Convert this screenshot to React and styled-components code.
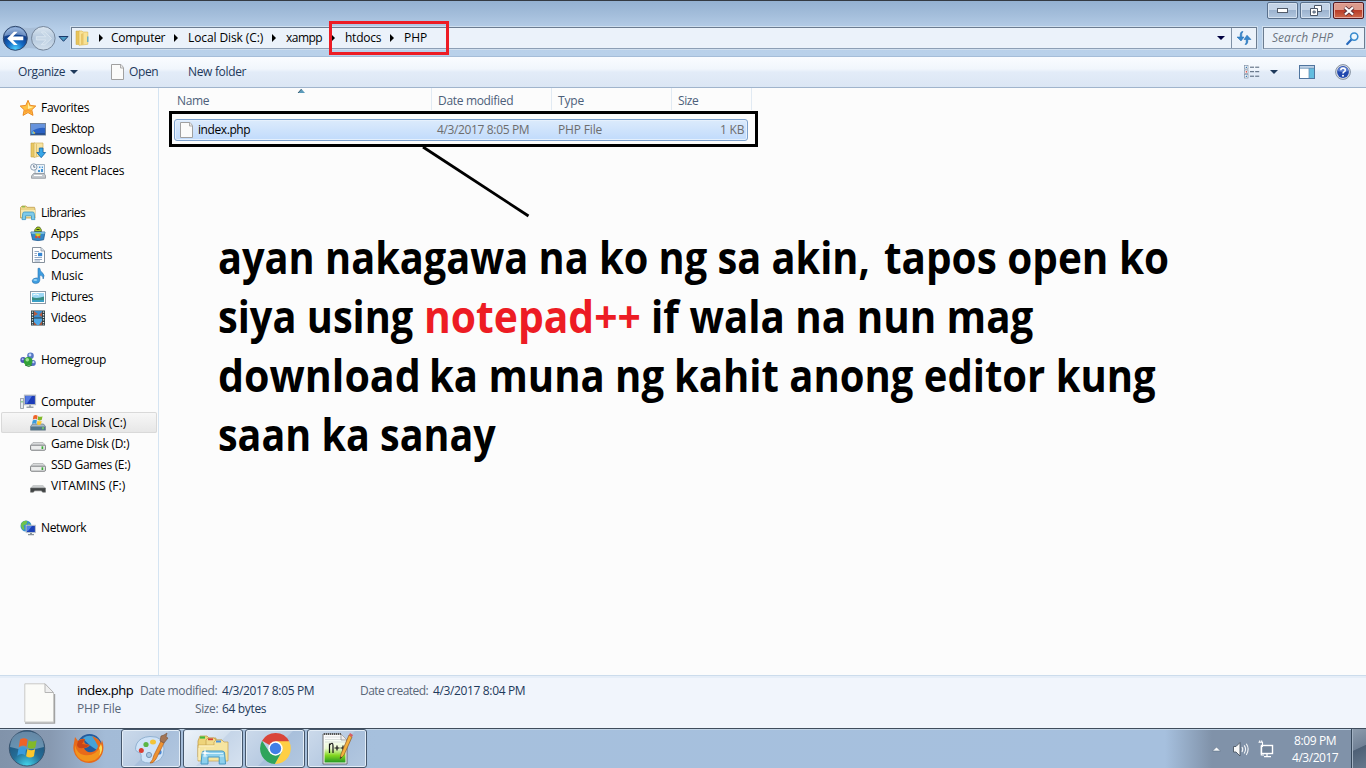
import React, { useLayoutEffect, useRef, useState } from "react";
import styled, { createGlobalStyle, css } from "styled-components";

const Global = createGlobalStyle`
  * { box-sizing: border-box; }
  html, body { margin: 0; padding: 0; overflow: hidden; }
  body { font: 12px/16px "Open Sans", "Noto Sans", sans-serif; color: #000; }
  svg { display: block; flex: none; overflow: visible; }
`;

/* ---------- text that keeps a fixed width ---------- */

const Slot = styled.span`
  display: block;
  flex: none;
  width: ${(p) => p.$w}px;
  margin-left: ${(p) => p.$ml || 0}px;
  white-space: pre;
`;
const Run = styled.span`
  display: inline-block;
  transform-origin: 0 50%;
  white-space: pre;
`;

function Label({ w, ml, children }) {
  const ref = useRef(null);
  const [spacing, setSpacing] = useState(0);
  useLayoutEffect(() => {
    const natural = ref.current.getBoundingClientRect().width;
    setSpacing((w + 0.2 - natural) / ref.current.textContent.length);
  }, [w]);
  return (
    <Slot $w={w} $ml={ml}>
      <Run ref={ref} style={{ letterSpacing: spacing }}>{children}</Run>
    </Slot>
  );
}

function Squeezed({ w, ml, children }) {
  const ref = useRef(null);
  const [scale, setScale] = useState(1);
  useLayoutEffect(() => setScale(w / ref.current.offsetWidth), [w]);
  return (
    <Slot $w={w} $ml={ml}>
      <Run ref={ref} style={{ transform: `scaleX(${scale})` }}>{children}</Run>
    </Slot>
  );
}

/* ---------- window frame ---------- */

const Screen = styled.div`
  position: relative;
  width: 1366px;
  height: 768px;
  display: flex;
  flex-direction: column;
  overflow: hidden;
  background: #fcfcfc;
`;
const Frame = styled.header`
  height: 57px;
  border-top: 1px solid #343a42;
  background: linear-gradient(#94b1d1 0, #a4bedb 14px, #b8d0ea 30px, #b9d1ea 100%);
  border-bottom: 1px solid #a5bdd8;
`;
const Caption = styled.div`
  display: flex;
  justify-content: flex-end;
  gap: 2px;
  height: 26px;
  padding: 1px 2px 0 0;
`;
const CaptionButton = styled.div`
  width: 31px;
  height: 17px;
  display: flex;
  align-items: center;
  justify-content: center;
  border: 1px solid ${(p) => (p.$close ? "#541a22" : "#59708c")};
  border-radius: 2px;
  box-shadow: inset 0 0 0 1px ${(p) => (p.$close ? "#e6aaa0" : "#d4e1ef")};
  background: ${(p) =>
    p.$close
      ? "linear-gradient(#dc9a8c 0 45%, #b93c28 50%, #cf6a4c)"
      : "linear-gradient(#c3d3e6 0 45%, #9cb3cf 50%, #b3c8e0)"};
`;
const NavBar = styled.div`
  display: flex;
  height: 22px;
`;
const NavButtons = styled.div`
  width: 71px;
  height: 22px;
  flex: none;
`;
const boxed = css`
  height: 22px;
  display: flex;
  align-items: center;
  border: 1px solid #6b7c90;
  border-bottom-color: #8d9fb5;
  background: #ebf2fa;
  box-shadow: 0 0 0 1px #cfdfef;
`;
const Address = styled.div`
  ${boxed}
  width: 1186px;
  padding-left: 3px;
`;
const CrumbArrow = styled.div`
  width: 23px;
  padding-right: 1px;
  display: flex;
  justify-content: center;
`;
const AddressEnd = styled.div`
  margin-left: auto;
  height: 100%;
  display: flex;
  align-items: center;
`;
const Drop = styled.div`
  padding-right: 6px;
`;
const Refresh = styled.div`
  width: 25px;
  height: 100%;
  border-left: 1px solid #7f91a6;
  display: flex;
  align-items: center;
  justify-content: center;
`;
const Search = styled.div`
  ${boxed}
  width: 102px;
  margin-left: 6px;
  padding-left: 8px;
  font-style: italic;
  color: #6d7580;
  gap: 13px;
`;

const Toolbar = styled.div`
  height: 31px;
  flex: none;
  display: flex;
  align-items: center;
  padding: 0 15px 0 18px;
  color: #1e395b;
  background: linear-gradient(#fafcff 0, #f1f6fc 12px, #e3ecf8 15px, #dbe6f4 30px);
  border-bottom: 1px solid #a0b4cc;
`;
const Gap = styled.div`
  flex: none;
  width: ${(p) => p.$w}px;
`;
const Spacer = styled.div`
  flex: 1;
`;

/* ---------- navigation pane ---------- */

const Body = styled.main`
  height: 587px;
  flex: none;
  display: flex;
`;
const Sidebar = styled.nav`
  width: 159px;
  flex: none;
  padding-top: 9px;
  border-right: 1px solid #d5e4f2;
`;
const NavItem = styled.div`
  height: 21px;
  margin: 0 1px;
  padding-left: ${(p) => (p.$top ? 19 : 29)}px;
  display: flex;
  align-items: center;
  gap: 5px;
  border-radius: 2px;
  ${(p) =>
    p.$active &&
    css`
      background: linear-gradient(#f8f8f8, #e6e6e6);
      box-shadow: inset 0 0 0 1px #d9d9d9;
    `}
`;
const NavGroup = styled.div`
  margin-bottom: 21px;
`;

/* ---------- file list ---------- */

const Files = styled.section`
  flex: 1;
`;
const Head = styled.div`
  height: 24px;
  display: flex;
  padding-left: 12px;
  color: #4c607a;
`;
const HeadCell = styled.div`
  width: ${(p) => p.$w}px;
  height: 22px;
  padding: 5px 0 0 6px;
  border-right: 1px solid #e1eaf3;
`;
const FileRow = styled.div`
  width: 574px;
  height: 22px;
  margin: 7px 0 0 15px;
  padding-left: 5px;
  display: flex;
  align-items: center;
  border: 1px solid #7da2ce;
  border-radius: 3px;
  box-shadow: inset 0 0 0 1px #e5f0fd;
  background: linear-gradient(#dcebfc, #c1dbfc);
  color: #6d6d6d;
`;
const FileName = styled.div`
  color: #000;
`;

/* ---------- details pane ---------- */

const Details = styled.footer`
  height: 53px;
  flex: none;
  display: flex;
  padding: 7px 0 0 24px;
  border-top: 1px solid #ccdcec;
  box-shadow: inset 0 2px 0 #e6eef8;
  background: #f1f5fc;
  color: #5a6779;
`;
const DetailGrid = styled.div`
  margin-left: 22px;
  display: grid;
  grid-template-rows: 18px 18px;
  grid-template-columns: 63px 78px 4px 138px 69px 4px 100px;
`;
const Value = styled.div`
  color: #1e395b;
`;
const Title = styled.div`
  font-size: 13px;
  line-height: 15px;
  color: #000;
`;
const Right = styled.div`
  display: flex;
  justify-content: flex-end;
`;

/* ---------- taskbar ---------- */

const Taskbar = styled.div`
  height: 40px;
  flex: none;
  display: flex;
  border-top: 1px solid #3f4c5c;
  box-shadow: inset 0 1px 0 #c0d3e6;
  background: linear-gradient(90deg, #8193aa 0, #8799b1 50px, #a3bbd7 105px, #a6c0dd 380px, #a6c0de 1165px, #8092a9 1212px, #8092a9);
`;
const Start = styled.div`
  width: 121px;
  flex: none;
  display: flex;
  align-items: center;
`;
const TaskButton = styled.div`
  width: 60px;
  height: 39px;
  margin-right: ${(p) => p.$mr || 2}px;
  display: flex;
  align-items: center;
  justify-content: center;
  border: 1px solid #45566b;
  border-radius: 3px;
  box-shadow: inset 0 0 0 1px #e3edf7;
  background: ${(p) =>
    p.$active
      ? "linear-gradient(135deg, #eef4fa, #d3e0ee 50%, #c5d5e8 51%, #d6e2f0)"
      : "linear-gradient(135deg, #ccdaeb, #b8cbe2 50%, #a8bfdb 51%, #b3c8e0)"};
`;
const Tray = styled.div`
  margin-left: auto;
  display: flex;
  align-items: center;
`;
const Clock = styled.div`
  width: 46px;
  margin-left: 19px;
  display: flex;
  flex-direction: column;
  align-items: center;
  color: #fff;
  line-height: 17px;
`;
const ShowDesktop = styled.div`
  width: 15px;
  height: 39px;
  margin-left: 13px;
  border-left: 1px solid #36475a;
  box-shadow: inset 1px 0 0 #a4b3c4;
  background: linear-gradient(155deg, #8d9cad 0, #718196 48%, #4e6076 50%, #66788c);
`;

/* ---------- annotations ---------- */

const RedMark = styled.div`
  position: absolute;
  left: 329px;
  top: 21px;
  width: 120px;
  height: 34px;
  border: 3px solid #ed1c24;
`;
const BlackMark = styled.div`
  position: absolute;
  left: 169px;
  top: 111px;
  width: 589px;
  height: 36px;
  border: 3px solid #000;
`;
const Pointer = styled.svg`
  position: absolute;
  left: 420px;
  top: 145px;
`;
const SortMark = styled.svg`
  position: absolute;
  left: 298px;
  top: 89px;
`;
const Note = styled.div`
  position: absolute;
  left: 218px;
  top: 228px;
  font-size: 44px;
  line-height: 59px;
  font-weight: 700;
`;
const NoteLine = styled.div`
  display: flex;
  height: 59px;
`;
const Red = styled.div`
  color: #ed1c24;
`;

/* ---------- icons ---------- */

const Icon = ({ children, s = 16, v = 16 }) => (
  <svg width={s} height={s} viewBox={`0 0 ${v} ${v}`}>{children}</svg>
);
const ArrowRight = () => <svg width="4" height="8" viewBox="0 0 4 8"><path d="M0 0L4 4L0 8Z" /></svg>;
const ArrowDown = ({ fill = "#1e395b" }) => (
  <svg width="8" height="4" viewBox="0 0 8 4"><path d="M0 0H8L4 4Z" fill={fill} /></svg>
);
const Page = ({ w = 14, h = 16 }) => (
  <svg width={w} height={h} viewBox="0 0 14 16">
    <path d="M.5.5H10L12.5 3.5V15.5H.5Z" fill="#fbfbfa" stroke="#a0a0a0" strokeWidth="1" />
    <path d="M9.5 .5V4H12.5" fill="#e9e9e9" stroke="#a5a5a5" strokeWidth=".9" />
  </svg>
);
const BigPage = () => (
  <svg width="31" height="41" viewBox="0 0 31 41">
    <path d="M1 40H30.5V11" fill="none" stroke="#a2a2a2" strokeWidth="1.4" />
    <path d="M.8.8H21L29.5 10V39H.8Z" fill="#fbfbf8" stroke="#c9c9c6" />
    <path d="M21 .8V9.5H29.5Z" fill="#efefef" stroke="#b5b5b5" />
  </svg>
);
const Star = () => (
  <Icon>
    <path d="M8 .3L10.2 5.4L15.8 6L11.8 9.8L13 15.4L8 12.6L3 15.4L4.2 9.8L.2 6L5.8 5.4Z" fill="#ffc143" stroke="#e88119" strokeWidth=".9" />
    <path d="M8 2.5L9.3 6.3L13.5 7L8 9Z" fill="#fff0a4" />
    <path d="M8 9L11 10L11.8 13.4L8 11.3L4.4 13.4L5 10Z" fill="#fb9f35" />
  </Icon>
);
const Desktop = () => (
  <Icon>
    <rect x=".5" y="2.5" width="15" height="11.5" fill="#2b62c4" stroke="#718299" />
    <path d="M1 3H15V7Q8 6 1 11Z" fill="#6793dc" />
    <path d="M1 13H15" stroke="#244a80" strokeWidth="1.4" />
    <path d="M1.5 10.5H4V13H1.5Z" fill="#54b4e8" /><path d="M3 10L5.5 12L4 13Z" fill="#f2c644" />
  </Icon>
);
const Downloads = () => (
  <Icon>
    <path d="M1 1H5V15H1Z" fill="#e9c862" stroke="#c6a244" strokeWidth=".6" />
    <path d="M4 1H13V13L4 15.5Z" fill="#f7e3a0" stroke="#d1b05a" strokeWidth=".7" />
    <path d="M6.5 2V14.5" stroke="#e3c36d" strokeWidth="1" />
    <path d="M9.3 6H13V10.5H15.6L11.2 15.7L6.8 10.5H9.3Z" fill="#38a7e8" stroke="#1762a5" strokeWidth=".8" />
  </Icon>
);
const Recent = () => (
  <Icon>
    <path d="M5 1.5H14.5V11H5Z" fill="#eaf3fa" stroke="#8fa1b2" strokeWidth=".8" />
    <path d="M9 3.5H10.4V5H9ZM11.8 3.5H13V5H11.8ZM8 7H10V9H8ZM11 6H13V9H11Z" fill="#4897d8" />
    <path d="M1.5 13L3.5 10.5H14L15.5 12.5V15.3H1.5Z" fill="#c3c8cd" stroke="#84898f" strokeWidth=".7" />
    <path d="M4 12.5H12" stroke="#fff" />
    <circle cx="3.8" cy="4" r="3.2" fill="#f7f9fb" stroke="#8195aa" strokeWidth=".9" />
    <path d="M3.8 2V4.2H5.3" fill="none" stroke="#41566e" strokeWidth=".8" />
  </Icon>
);
const Libraries = () => (
  <Icon>
    <path d="M.5 2.5L2 1H6L7 2.3H14.5L15 4V13H.5Z" fill="#ecd588" stroke="#c1a04e" strokeWidth=".8" />
    <path d="M1 5H15V12H1Z" fill="#f8eab1" />
    <path d="M2 1.8H5" stroke="#73b943" strokeWidth="1" />
    <path d="M2.8 8.3Q3 7 4.5 7H12.6Q14 7 14.2 8.3L14.9 14.6H11.5V10.8H5.6V14.6H2Z" fill="#7fcbea" stroke="#3a94c2" strokeWidth=".8" />
  </Icon>
);
const Apps = () => (
  <Icon>
    <path d="M4.5 5.5Q4.6 3 6 2.2L7 1H9.6L10.4 2.2Q11.5 3 11.5 5.5Z" fill="#a6c922" stroke="#3c5212" strokeWidth=".7" />
    <path d="M.9 6H15L13.6 13.8Q8 15.4 2.6 13.8Z" fill="#3489c8" stroke="#1d5a94" strokeWidth=".8" />
    <path d="M1.2 6H14.8L14.5 8H1.6Z" fill="#71b8df" />
    <path d="M5 7.5H11L10 10H6Z" fill="#b1d129" /><circle cx="6.3" cy="11" r="1.2" fill="#e34b2a" />
    <circle cx="9.3" cy="11" r="1.2" fill="#e34b2a" /><circle cx="7.8" cy="9.4" r="1.1" fill="#f1c52d" /><path d="M6.5 3H9.5V4H6.5Z" fill="#263d15" />
  </Icon>
);
const Documents = () => (
  <Icon>
    <path d="M2.5 .5H11L14.5 4V15.5H2.5Z" fill="#fff" stroke="#788592" strokeWidth=".9" />
    <path d="M11 .6V4H14.3" fill="#dce5ee" stroke="#788592" strokeWidth=".7" />
    <path d="M4.5 4.5H9M4.5 6.5H7M4.5 8.5H7M4.5 10.5H12M4.5 12.5H12M4.5 14H10" stroke="#7993b4" strokeWidth=".8" />
    <path d="M8 5.8H12.2V9.2H8Z" fill="#3585d2" />
  </Icon>
);
const Music = () => (
  <Icon>
    <path d="M8 .3H9.8Q10 3.2 12.3 4.7Q15.3 7 13.2 11Q13.4 7.7 9.8 7V12.3Q9.5 15.5 5.6 15.6Q2 15.3 2.2 12.8Q2.7 10.3 6 10Q7 9.9 8 10.2Z" fill="#3e9ee1" stroke="#276eae" strokeWidth=".6" />
    <ellipse cx="5.3" cy="12" rx="2" ry="1" fill="#97d1f4" />
  </Icon>
);
const Pictures = () => (
  <Icon>
    <rect x=".5" y="2.5" width="15" height="12" fill="#fff" stroke="#8e9ba8" />
    <path d="M2 4H14V9H2Z" fill="#9ed8f5" /><path d="M2 8Q7 10 14 7.5V13H2Z" fill="#388e86" />
    <path d="M2 11H14V13H2Z" fill="#3a9fc4" /><path d="M3 6Q6 4 9 6" stroke="#f4fcff" fill="none" />
  </Icon>
);
const Videos = () => (
  <Icon>
    <rect x="1" y=".5" width="14" height="15" fill="#2d3d43" />
    <path d="M4 1H12V7.5H4Z" fill="#3c8ed0" /><path d="M4 8.5H12V15H4Z" fill="#4ca8e8" />
    <path d="M4 1L8 4L4 6ZM12 2L9 5L12 7Z" fill="#b65c40" /><path d="M4 12L7 15H4ZM12 11L9 15H12Z" fill="#a6573e" />
    <path d="M2.5 1.5V15M13.5 1.5V15" stroke="#e4eceb" strokeWidth="1.3" strokeDasharray="1.3 1.3" />
  </Icon>
);
const Homegroup = () => (
  <Icon>
    <circle cx="10.5" cy="3.8" r="3.3" fill="#5577c5" /><circle cx="3.2" cy="8" r="2.9" fill="#4b58b9" />
    <circle cx="12.8" cy="10.9" r="3" fill="#526fc0" /><circle cx="8.2" cy="9.4" r="4.4" fill="#32a238" />
    <circle cx="10" cy="3" r="1.4" fill="#c7dafa" /><circle cx="2.7" cy="7.2" r="1" fill="#b5c4f4" />
    <circle cx="7.3" cy="7.7" r="1.8" fill="#9ee492" /><circle cx="13.4" cy="10.2" r="1.1" fill="#c2d6f8" />
    <path d="M5 13Q9 16 12 13" stroke="#22742d" fill="none" />
  </Icon>
);
const Computer = () => (
  <Icon>
    <rect x=".6" y="4.5" width="2.8" height="10" fill="#e6eaed" stroke="#8d979e" strokeWidth=".8" />
    <path d="M2 7V8.5" stroke="#3bb843" />
    <rect x="4.5" y="1.2" width="11" height="9.4" fill="#1c3cb9" stroke="#b3bbc3" strokeWidth="1.2" />
    <path d="M5.3 2H12L7 9.5H5.3Z" fill="#5278e3" />
    <path d="M9 11.2H11V12.6H13.5V14H6.5V12.6H9Z" fill="#9aa3aa" />
  </Icon>
);
const Flag = () => (
  <>
    <path d="M3.3 1.4Q5.5 .1 7.4 1.4L6.8 4.5Q4.8 3.3 2.6 4.7Z" fill="#ef6328" />
    <path d="M8 1.7Q10 2.8 12.3 1.7L11.6 4.8Q9.5 6 7.4 4.8Z" fill="#82b929" />
    <path d="M2.5 5.3Q4.6 4 6.7 5.2L6 8.2Q4 7 1.8 8.4Z" fill="#399bdc" />
    <path d="M7.3 5.5Q9.4 6.6 11.5 5.5L10.8 8.6Q8.7 9.7 6.6 8.6Z" fill="#fcc72c" />
  </>
);
const SystemDisk = () => (
  <Icon>
    <path d="M2.5 9H13.5L15.5 11.5V15.2H.5V11.5Z" fill="#a9bac5" stroke="#536776" strokeWidth=".6" />
    <path d="M1 11.5H15V15H1Z" fill="#54788d" /><path d="M13 12V14.3" stroke="#7fe65c" strokeWidth="1.2" />
    <g transform="translate(.2 -.8) scale(1 1.18)"><Flag /></g>
  </Icon>
);
const Disk = () => (
  <Icon>
    <path d="M3 6.5H13L15.5 9.3V13.2Q15.5 14 14.5 14H1.5Q.5 14 .5 13.2V9.3Z" fill="#d8dadb" stroke="#a6a9ab" strokeWidth=".7" />
    <rect x=".6" y="9.2" width="14.8" height="5" rx="1" fill="#eceded" stroke="#747779" strokeWidth=".9" />
    <path d="M12.4 10.3V13" stroke="#3aac36" strokeWidth="1.7" />
  </Icon>
);
const Removable = () => (
  <Icon>
    <path d="M3 7H13L15.5 10H.5Z" fill="#c9cccd" />
    <path d="M.5 10H15.5V14.2H12.6L11.4 12.8H4.6L3.4 14.2H.5Z" fill="#414445" stroke="#707374" strokeWidth=".6" />
  </Icon>
);
const Network = () => (
  <Icon>
    <circle cx="6" cy="6" r="5.5" fill="#348fce" /><path d="M1.5 3Q4 0 7.5 1L6.5 4L3.5 5.5L4.5 9L3 10Q0 6 1.5 3M8 3L11 5L9 7Z" fill="#6fc34a" />
    <rect x="6.2" y="5.3" width="9.2" height="7.3" fill="#1c41b8" stroke="#bdc5cb" strokeWidth="1" />
    <path d="M7 6H12L8 11H7Z" fill="#5280e4" /><path d="M10 13H12V14H14V15.2H8V14H10Z" fill="#88939b" />
  </Icon>
);
const Folder = () => (
  <svg width="15" height="16" viewBox="0 0 15 16">
    <path d="M1 1H5V14.5H1Z" fill="#e8c45b" stroke="#cfaa43" strokeWidth=".5" />
    <path d="M4 1H7L8 2H12.8V14.3L4 15.3Z" fill="#f8e296" stroke="#dcb74e" strokeWidth=".6" />
    <path d="M6 4L8.5 3V14.8L6 15Z" fill="#e8c66a" /><path d="M12.8 6.5V12" stroke="#4da6cf" strokeWidth="1.2" />
  </svg>
);
const BackForward = () => (
  <svg width="71" height="22" viewBox="0 27 71 22">
    <defs>
      <radialGradient id="back" cx=".5" cy=".95" r=".85"><stop stopColor="#4ed1ff" /><stop offset=".4" stopColor="#146ac4" /><stop offset=".75" stopColor="#113e8b" /><stop offset="1" stopColor="#7fa1d0" /></radialGradient>
      <linearGradient id="fwd" x1="0" x2="0" y1="0" y2="1"><stop stopColor="#dce7f1" /><stop offset=".5" stopColor="#b4c8dd" /><stop offset="1" stopColor="#d5e2ee" /></linearGradient>
    </defs>
    <path d="M15 26Q29 30 43 26V51Q29 45 15 51Z" fill="#a9bfd8" />
    <circle cx="15.3" cy="38.3" r="12" fill="url(#back)" stroke="#30486d" />
    <path d="M4.4 36Q6 28 15 27.4Q24 28 26.2 36Q15 33 4.4 36Z" fill="#9db9df" opacity=".6" />
    <path d="M7.2 38.4L14 31.7H17.7L13 36.5H23.3V40.3H13L17.7 45H14Z" fill="#fff" />
    <circle cx="43.3" cy="38.3" r="11.8" fill="url(#fwd)" stroke="#75869b" />
    <path d="M51.5 38.4L44.8 32H41.3L45.8 36.7H36.3V40H45.8L41.3 44.7H44.8Z" fill="#c8d8e7" stroke="#dde8f2" strokeWidth=".8" />
    <path d="M59 36.5H68L63.5 41.3Z" fill="#4b9bc5" stroke="#1b3a6b" />
  </svg>
);
const RefreshIcon = () => (
  <Icon>
    <path d="M7 1.5Q3.8 1 4.2 7H1L5 11L8 7H5.8Q5.3 3 7 1.5Z" fill="#3787cd" stroke="#1765ad" strokeWidth=".5" />
    <path d="M9 14.5Q12.2 15 11.8 9.5H15L11 5.2L8 9.5H10.2Q10.7 13 9 14.5Z" fill="#3787cd" stroke="#1765ad" strokeWidth=".5" />
  </Icon>
);
const Magnifier = () => (
  <svg width="13" height="13" viewBox="0 0 13 13">
    <path d="M1.2 12L5.2 7.7" stroke="#286abd" strokeWidth="2.2" strokeLinecap="round" />
    <circle cx="8.2" cy="4.6" r="3.6" fill="#eef7fd" stroke="#398bce" strokeWidth="1.6" />
  </svg>
);
const ViewIcon = () => (
  <svg width="16" height="14" viewBox="0 0 16 14">
    {[1, 5.5, 10].map((y, i) => (
      <g key={y}><rect x=".5" y={y - 0.5} width="3.5" height="3.5" fill="#fff" stroke="#8292a6" strokeWidth=".7" />
        <rect x="1.7" y={y + 0.7} width="1.3" height="1.3" fill={i === 1 ? "#d9342b" : "#3479b5"} />
        <path d={`M6 ${y + 1.2}H10M11.2 ${y + 1.2}H15.2`} stroke="#4e5f74" strokeWidth="1" /></g>
    ))}
  </svg>
);
const PaneIcon = () => (
  <svg width="16" height="14" viewBox="0 0 16 14">
    <rect x=".5" y=".5" width="15" height="13" fill="#fff" stroke="#50759f" />
    <path d="M1 1H15V3H1Z" fill="#bed1e5" /><path d="M10 3H15V13H10Z" fill="#63bddf" /><path d="M10 3V13M1 3.3H15" stroke="#6a91b5" strokeWidth=".8" />
  </svg>
);
const HelpIcon = () => (
  <Icon>
    <circle cx="8" cy="8" r="7.4" fill="#d8dde4" stroke="#7b8798" strokeWidth=".9" />
    <circle cx="8" cy="8" r="5.9" fill="#2148ae" /><path d="M2.5 7A5.7 5.7 0 0 1 13.5 7Q8 9 2.5 7Z" fill="#5b7dcf" />
    <path d="M5.8 6.3Q5.8 4.1 8 4.1Q10.3 4.1 10.3 6Q10.3 7.2 9 7.9Q8 8.5 8 9.5" fill="none" stroke="#fff" strokeWidth="1.6" />
    <circle cx="8" cy="11.8" r="1" fill="#fff" />
  </Icon>
);
const StartOrb = () => (
  <svg width="56" height="39" viewBox="0 0 56 39">
    <defs><radialGradient id="orb" cx=".5" cy="1" r=".95"><stop stopColor="#44d9ee" /><stop offset=".45" stopColor="#246d97" /><stop offset="1" stopColor="#1f4c73" /></radialGradient></defs>
    <circle cx="27" cy="19.3" r="17.7" fill="url(#orb)" stroke="#395570" strokeWidth="1" />
    <path d="M10 18Q11 3 27 2.5Q43 3 44 18Q27 23 10 18Z" fill="#b3cadd" opacity=".48" />
    <g transform="translate(13.9 7.4) scale(1.85 2.3)"><Flag /></g>
  </svg>
);
const Firefox = () => (
  <svg width="31" height="31" viewBox="0 0 31 31">
    <circle cx="16.5" cy="13.5" r="12.5" fill="#245b9e" /><path d="M10 5Q17 0 25 6Q28 12 24 17Q15 12 10 5Z" fill="#46a2d7" />
    <path d="M2 4L5 8Q8 5 12 6Q10 9 13 11L17 12Q15 15 11 15Q13 20 19 19Q24 18 25 13Q22 7 19 3Q27 6 28 11L29 7Q33 18 26 26Q18 33 8 28Q-2 21 1 10Z" fill="#e86a1a" />
    <path d="M2 12Q4 21 11 22Q22 24 28 13Q30 22 22 27Q12 31 5 24Q1 19 2 12Z" fill="#f2941d" />
    <path d="M28 11Q31 17 26 23Q28 18 26 15Z" fill="#ffdc56" /><path d="M5 8Q9 6 12 6L9 11L16 12Q14 15 10 15Q5 16 4 12Z" fill="#c94516" />
  </svg>
);
const Paint = () => (
  <svg width="34" height="34" viewBox="0 0 34 34">
    <path d="M16 4.5Q30 4 30 17Q30 31 15 31Q7 31 7 26Q8 21 4 20Q0 19 2.5 12Q6 5 16 4.5Z" fill="#cfe3f8" stroke="#92b2d1" />
    <circle cx="15" cy="23" r="2.6" fill="#a9c6e1" stroke="#7798ba" />
    <circle cx="7.3" cy="18.5" r="2.5" fill="#da3d32" /><circle cx="12" cy="12.5" r="2.6" fill="#5bb646" />
    <ellipse cx="19" cy="10" rx="3" ry="2.5" fill="#f3c438" /><circle cx="25" cy="20" r="2.6" fill="#4785d2" />
    <path d="M27 9L30 11L22 27Q19 32 16 31Q19 28 20 23Z" fill="#ef9330" stroke="#b8601e" strokeWidth=".7" />
    <path d="M26 9L27 4L30 3L33 1L32 5L34 6L30 11Z" fill="#a37555" stroke="#765038" strokeWidth=".6" />
  </svg>
);
const Explorer = () => (
  <svg width="34" height="32" viewBox="0 0 34 32">
    <path d="M2 8L4 3H11L13 5H20V24H2Z" fill="#eed47a" stroke="#bc953d" strokeWidth=".7" />
    <path d="M4 4.5H9" stroke="#3fba40" strokeWidth="2.2" />
    <path d="M10 7L12 5H18L20 7H26V26H10Z" fill="#f2dc8c" stroke="#c39e49" strokeWidth=".7" /><path d="M12 6.3H17" stroke="#d63f34" strokeWidth="1.8" />
    <path d="M18 9L20 7H26L28 9H32V28H2V12H18Z" fill="#f6e5a1" stroke="#c7a14c" strokeWidth=".7" />
    <path d="M20 8.5H25" stroke="#4b93db" strokeWidth="2" /><path d="M3 13H18M3 15V27" stroke="#fff4c8" />
    <path d="M6 20Q6.2 18 8.5 18H26Q28.3 18 28.6 20L29.5 31H23.2V24H12V31H5Z" fill="#8dd0ed" stroke="#4698c3" />
    <path d="M8 20.5H27M7 23H11M24 23H28" stroke="#d6f2fc" strokeWidth="1.2" />
    <path d="M9 15L9.8 19.2L14 20L9.8 20.8L9 25L8.2 20.8L4 20L8.2 19.2Z" fill="#fff" />
  </svg>
);
const Chrome = () => (
  <svg width="31" height="31" viewBox="0 0 30 30">
    <path d="M15 15L2 7.6A15 15 0 0 1 28.2 8Z" fill="#d9453a" />
    <path d="M28.1 8A15 15 0 0 1 14.3 30L21.2 18.2L15 8Z" fill="#fecf45" />
    <path d="M2 7.6A15 15 0 0 0 14.3 30L21 18.2L9 18.5Z" fill="#2fa45b" />
    <circle cx="15" cy="15" r="7" fill="#fff" /><circle cx="15" cy="15" r="5.5" fill="#417fe8" />
  </svg>
);
const NotepadPP = () => (
  <svg width="31" height="33" viewBox="0 0 31 33">
    <defs><linearGradient id="np" x1="0" x2="0" y1="0" y2="1"><stop stopColor="#fafffa" /><stop offset=".4" stopColor="#eaf8cf" /><stop offset=".7" stopColor="#83d61f" /><stop offset="1" stopColor="#239723" /></linearGradient></defs>
    <path d="M1 2H19L25 8V32H1Z" fill="#fcfcfc" stroke="#6c6f70" />
    <path d="M2.5 7H23.5V30.5H2.5Z" fill="url(#np)" /><path d="M3 5H19M3 7.5H22M3 10H24" stroke="#c6cccc" strokeWidth=".6" />
    <path d="M2 2H20" stroke="#555" strokeWidth="2" strokeDasharray="1 1" /><path d="M19 2V8H25" fill="#eee" stroke="#888" strokeWidth=".7" />
    <path d="M7.5 21V11.5M7.5 13Q11 9 11 14V21M12.5 16H17.5M15 13.5V18.5M18.5 16H23.5M21 13.5V18.5" fill="none" stroke="#111" strokeWidth="1.2" />
    <path d="M27 3L30 5L22 23L18 27L19 22Z" fill="#f4b13e" stroke="#8c5b2b" strokeWidth=".7" />
    <path d="M27 3L28 1L31 3L30 5Z" fill="#d85d63" /><path d="M18 27L18.6 24.5L20 25.3Z" fill="#242424" />
  </svg>
);
const TrayIcons = () => (
  <svg width="61" height="18" viewBox="1212 740 61 18">
    <path d="M1212.5 751L1216.5 747L1220.5 751Z" fill="#f8fafc" stroke="#52647b" strokeWidth=".5" />
    <path d="M1233.5 746.5H1236L1240 742.5V756L1236 752H1233.5Z" fill="#f7f7f7" stroke="#4b5663" strokeWidth=".9" />
    <path d="M1242 747Q1243.5 749 1242 752M1244.2 745.3Q1247 749 1244.2 753.5M1246.3 743.8Q1250 749 1246.3 755" fill="none" stroke="#f4f6f8" strokeWidth="1.1" />
    <rect x="1261.5" y="745.5" width="11" height="8" fill="#718399" stroke="#fff" strokeWidth="1.4" />
    <path d="M1264 756.7H1271M1267 754V756" stroke="#fff" strokeWidth="1.3" />
    <path d="M1258.5 742.3H1262.5V746.5H1261.3V755H1264M1259.7 742V740.5M1261.7 742V740.5" fill="none" stroke="#fff" strokeWidth="1.1" />
  </svg>
);

const groups = [
  [["Favorites", 48, Star], ["Desktop", 43, Desktop], ["Downloads", 60, Downloads], ["Recent Places", 73, Recent]],
  [["Libraries", 44, Libraries], ["Apps", 27, Apps], ["Documents", 61, Documents], ["Music", 32, Music], ["Pictures", 42, Pictures], ["Videos", 35, Videos]],
  [["Homegroup", 65, Homegroup]],
  [["Computer", 54, Computer], ["Local Disk (C:)", 75, SystemDisk], ["Game Disk (D:)", 78, Disk], ["SSD Games (E:)", 79, Disk], ["VITAMINS (F:)", 74, Removable]],
  [["Network", 45, Network]],
];
const crumbs = [["Computer", 54], ["Local Disk (C:)", 75], ["xampp", 36], ["htdocs", 36], ["PHP", 23]];

export default function App() {
  return (
    <Screen>
      <Global />
      <Frame>
        <Caption>
          <CaptionButton><svg width="11" height="5"><rect x=".5" y=".5" width="10" height="4" fill="#fff" stroke="#515b69" /></svg></CaptionButton>
          <CaptionButton>
            <svg width="12" height="11" viewBox="0 0 12 11"><path d="M4.5.5H11.5V6.5H4.5Z" fill="#fff" stroke="#4b5768" /><path d="M.5 3.5H7.5V10.5H.5Z" fill="#fff" stroke="#4b5768" /><path d="M3 6H5.2V8H3Z" fill="#9fb4cc" stroke="#4b5768" strokeWidth=".8" /></svg>
          </CaptionButton>
          <CaptionButton $close>
            <svg width="12" height="10" viewBox="0 0 12 10"><path d="M1.8 1.5L10.2 8.5M10.2 1.5L1.8 8.5" stroke="#5d3039" strokeWidth="4" /><path d="M2 1.5L10 8.5M10 1.5L2 8.5" stroke="#fff" strokeWidth="2.3" /></svg>
          </CaptionButton>
        </Caption>
        <NavBar>
          <NavButtons><BackForward /></NavButtons>
          <Address>
            <Folder />
            {crumbs.map(([t, w], i) => (
              <React.Fragment key={t}>
                <CrumbArrow><ArrowRight /></CrumbArrow>
                <Label w={w} ml={i ? 0 : -2}>{t}</Label>
              </React.Fragment>
            ))}
            <AddressEnd>
              <Drop><ArrowDown fill="#000040" /></Drop>
              <Refresh><RefreshIcon /></Refresh>
            </AddressEnd>
          </Address>
          <Search><Label w={61}>Search PHP</Label><Magnifier /></Search>
        </NavBar>
      </Frame>
      <Toolbar>
        <Label w={47}>Organize</Label><Gap $w={5} /><ArrowDown />
        <Gap $w={33} /><Page /><Gap $w={4} /><Label w={29}>Open</Label>
        <Gap $w={30} /><Label w={58}>New folder</Label>
        <Spacer />
        <ViewIcon /><Gap $w={10} /><ArrowDown /><Gap $w={21} /><PaneIcon /><Gap $w={20} /><HelpIcon />
      </Toolbar>
      <Body>
        <Sidebar>
          {groups.map((items) => (
            <NavGroup key={items[0][0]}>
              {items.map(([t, w, Pic], i) => (
                <NavItem key={t} $top={i === 0} $active={t === "Local Disk (C:)"}>
                  <Pic /><Label w={w}>{t}</Label>
                </NavItem>
              ))}
            </NavGroup>
          ))}
        </Sidebar>
        <Files>
          <Head>
            <HeadCell $w={261}><Label w={32}>Name</Label></HeadCell>
            <HeadCell $w={120}><Label w={75}>Date modified</Label></HeadCell>
            <HeadCell $w={120}><Label w={26}>Type</Label></HeadCell>
            <HeadCell $w={80}><Label w={20}>Size</Label></HeadCell>
          </Head>
          <FileRow>
            <Page /><FileName><Label w={52} ml={4}>index.php</Label></FileName>
            <Label w={92} ml={187}>4/3/2017 8:05 PM</Label>
            <Label w={44} ml={29}>PHP File</Label>
            <Label w={24} ml={118}>1 KB</Label>
          </FileRow>
        </Files>
      </Body>
      <Details>
        <BigPage />
        <DetailGrid>
          <Title><Label w={56}>index.php</Label></Title>
          <Label w={77}>Date modified:</Label><span />
          <Value><Label w={92}>4/3/2017 8:05 PM</Label></Value>
          <Label w={68}>Date created:</Label><span />
          <Value><Label w={92}>4/3/2017 8:04 PM</Label></Value>
          <Label w={44}>PHP File</Label>
          <Right><Label w={23}>Size:</Label></Right><span />
          <Value><Label w={44}>64 bytes</Label></Value>
        </DetailGrid>
      </Details>
      <Taskbar>
        <Start><StartOrb /><Gap $w={17} /><Firefox /></Start>
        <TaskButton><Paint /></TaskButton>
        <TaskButton $active><Explorer /></TaskButton>
        <TaskButton><Chrome /></TaskButton>
        <TaskButton $mr={1}><NotepadPP /></TaskButton>
        <Tray>
          <TrayIcons />
          <Clock><Label w={42}>8:09 PM</Label><Label w={46}>4/3/2017</Label></Clock>
          <ShowDesktop />
        </Tray>
      </Taskbar>

      <SortMark width="7" height="4" viewBox="0 0 7 4">
        <path d="M0 4L3.5 0L7 4Z" fill="#5b9bbb" />
        <path d="M0 4L3.5 0" stroke="#3c5e72" />
      </SortMark>
      <Pointer width="112" height="74" viewBox="0 0 112 74">
        <path d="M3 2L108.5 71" stroke="#000" strokeWidth="2.8" />
      </Pointer>
      <RedMark />
      <BlackMark />
      <Note>
        <NoteLine>
          <Squeezed w={652}>ayan nakagawa na ko ng sa akin,</Squeezed>
          <Squeezed w={285} ml={14}>tapos open ko</Squeezed>
        </NoteLine>
        <NoteLine>
          <Squeezed w={195}>siya using</Squeezed>
          <Red><Squeezed w={217} ml={11}>notepad++</Squeezed></Red>
          <Squeezed w={382} ml={10}>if wala na nun mag</Squeezed>
        </NoteLine>
        <NoteLine>
          <Squeezed w={203}>download</Squeezed>
          <Squeezed w={235} ml={8}>ka muna ng</Squeezed>
          <Squeezed w={482} ml={10}>kahit anong editor kung</Squeezed>
        </NoteLine>
        <NoteLine><Squeezed w={278}>saan ka sanay</Squeezed></NoteLine>
      </Note>
    </Screen>
  );
}
